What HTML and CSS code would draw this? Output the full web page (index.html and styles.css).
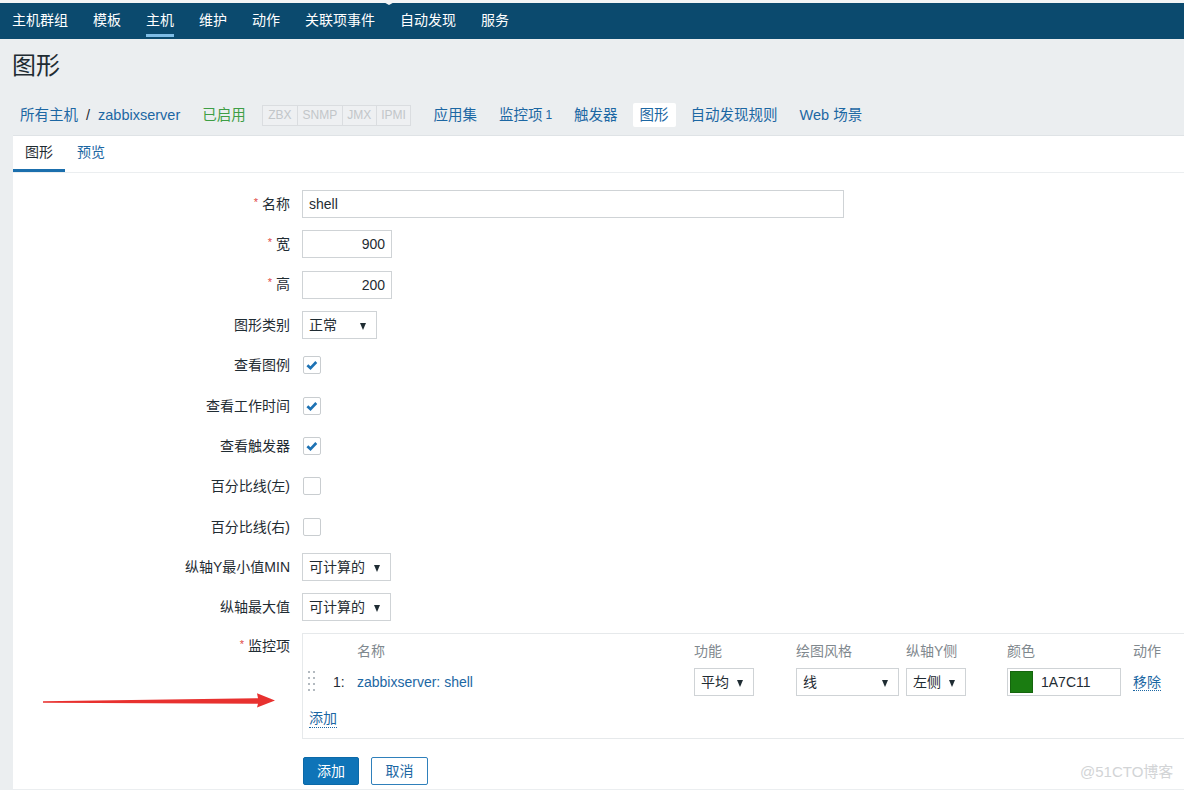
FILE: index.html
```html
<!DOCTYPE html>
<html lang="zh-CN">
<head>
<meta charset="utf-8">
<title>图形</title>
<link rel="stylesheet" href="styles.css">
</head>
<body>
<div class="top-strip"><span class="notch"></span></div>
<nav class="main-nav">
  <a>主机群组</a><a>模板</a><a class="active">主机</a><a>维护</a><a>动作</a><a>关联项事件</a><a>自动发现</a><a>服务</a>
</nav>
<header class="page-title"><h1>图形</h1></header>
<div class="host-bar">
  <span class="hb-item"><a class="link">所有主机</a><span class="sep">/</span><a class="link">zabbixserver</a></span>
  <span class="hb-item status-on">已启用</span>
  <span class="status-box"><span>ZBX</span><span>SNMP</span><span>JMX</span><span>IPMI</span></span>
  <a class="hb-item link">应用集</a>
  <a class="hb-item link">监控项 <span class="count">1</span></a>
  <a class="hb-item link">触发器</a>
  <a class="hb-item link selected">图形</a>
  <a class="hb-item link">自动发现规则</a>
  <a class="hb-item link">Web 场景</a>
</div>
<main class="panel">
  <div class="tabs"><a class="tab active">图形</a><a class="tab link">预览</a></div>
  <div class="form-list">
    <div class="form-row">
      <label class="form-label"><span class="req">*</span>名称</label>
      <div class="field"><span class="text-input w-name">shell</span></div>
    </div>
    <div class="form-row">
      <label class="form-label"><span class="req">*</span>宽</label>
      <div class="field"><span class="text-input num w-num">900</span></div>
    </div>
    <div class="form-row">
      <label class="form-label"><span class="req">*</span>高</label>
      <div class="field"><span class="text-input num w-num">200</span></div>
    </div>
    <div class="form-row">
      <label class="form-label">图形类别</label>
      <div class="field"><span class="select w-75">正常<i class="caret"></i></span></div>
    </div>
    <div class="form-row">
      <label class="form-label">查看图例</label>
      <div class="field"><span class="checkbox"><svg viewBox="0 0 18 18" width="16" height="16"><polyline points="3.8,9.3 7.3,12.6 13.8,5.6" fill="none" stroke="#1d72b4" stroke-width="3"/></svg></span></div>
    </div>
    <div class="form-row">
      <label class="form-label">查看工作时间</label>
      <div class="field"><span class="checkbox"><svg viewBox="0 0 18 18" width="16" height="16"><polyline points="3.8,9.3 7.3,12.6 13.8,5.6" fill="none" stroke="#1d72b4" stroke-width="3"/></svg></span></div>
    </div>
    <div class="form-row">
      <label class="form-label">查看触发器</label>
      <div class="field"><span class="checkbox"><svg viewBox="0 0 18 18" width="16" height="16"><polyline points="3.8,9.3 7.3,12.6 13.8,5.6" fill="none" stroke="#1d72b4" stroke-width="3"/></svg></span></div>
    </div>
    <div class="form-row">
      <label class="form-label">百分比线(左)</label>
      <div class="field"><span class="checkbox"></span></div>
    </div>
    <div class="form-row">
      <label class="form-label">百分比线(右)</label>
      <div class="field"><span class="checkbox"></span></div>
    </div>
    <div class="form-row">
      <label class="form-label">纵轴Y最小值MIN</label>
      <div class="field"><span class="select w-89">可计算的<i class="caret"></i></span></div>
    </div>
    <div class="form-row">
      <label class="form-label">纵轴最大值</label>
      <div class="field"><span class="select w-89">可计算的<i class="caret"></i></span></div>
    </div>
    <div class="form-row items-row">
      <label class="form-label top"><span class="req">*</span>监控项</label>
      <div class="field">
        <div class="items-table">
          <div class="it-row it-head">
            <span></span><span></span><span>名称</span><span>功能</span><span>绘图风格</span><span>纵轴Y侧</span><span>颜色</span><span>动作</span>
          </div>
          <div class="it-row it-data">
            <span class="handle"><svg width="8" height="22" viewBox="0 0 8 22"><g fill="#b3bac0"><rect x="0" y="0" width="2" height="2"/><rect x="5" y="0" width="2" height="2"/><rect x="0" y="6" width="2" height="2"/><rect x="5" y="6" width="2" height="2"/><rect x="0" y="12" width="2" height="2"/><rect x="5" y="12" width="2" height="2"/><rect x="0" y="18" width="2" height="2"/><rect x="5" y="18" width="2" height="2"/></g></svg></span>
            <span class="it-num">1:</span>
            <a class="link">zabbixserver: shell</a>
            <span><span class="select w-60">平均<i class="caret"></i></span></span>
            <span><span class="select w-103">线<i class="caret"></i></span></span>
            <span><span class="select w-60">左侧<i class="caret"></i></span></span>
            <span><span class="color-input"><span class="swatch"></span>1A7C11</span></span>
            <span><a class="link dotted">移除</a></span>
          </div>
          <div class="it-add"><a class="link dotted">添加</a></div>
        </div>
      </div>
    </div>
    <div class="form-row buttons-row">
      <span></span>
      <div class="field buttons">
        <button class="btn primary">添加</button>
        <button class="btn alt">取消</button>
      </div>
    </div>
  </div>
</main>
<svg class="annotation" width="1184" height="790" viewBox="0 0 1184 790">
  <polygon points="43,701.3 258,698.3 257,693.3 275,700.5 257,707.6 258,703.7 43,702.8" fill="#e8312f"/>
</svg>
<div class="watermark">@51CTO博客</div>
</body>
</html>
```
FILE: styles.css
```css
* { box-sizing: border-box; }
html, body { margin: 0; padding: 0; overflow: hidden; }
body {
  width: 1184px;
  height: 790px;
  position: relative;
  background: #ebeef0;
  font-family: "Liberation Sans", "Noto Sans CJK SC", sans-serif;
  font-size: 14px;
  color: #1f2c33;
}
a { text-decoration: none; cursor: pointer; }
.link { color: #1c67a3; }

.top-strip { height: 3px; background: #f3f5f6; position: relative; }
.notch {
  position: absolute; left: 380px; top: 0; width: 0; height: 0;
  border-left: 9px solid transparent; border-right: 9px solid transparent;
  border-top: 5px solid #f3f5f6; z-index: 2;
}
.main-nav { display: flex; height: 36px; background: #0b4a6e; }
.main-nav a {
  display: block; position: relative; height: 36px;
  padding: 0 12.5px; line-height: 34px; color: #fff;
}
.main-nav a:first-child { padding-left: 12px; }
.main-nav a.active::after {
  content: ""; position: absolute; left: 12.5px; right: 12.5px; bottom: 2px;
  height: 3px; background: #7fbde6;
}

.page-title { height: 48px; padding: 12px 12px 0; }
.page-title h1 { margin: 0; font-size: 24px; font-weight: normal; line-height: 30px; color: #1f2c33; }

.host-bar {
  display: flex; align-items: center; height: 48px;
  padding: 8px 0 0 13px; font-size: 14.5px;
}
.hb-item { padding: 0 7px; line-height: 24px; height: 24px; margin-right: 8px; display: flex; align-items: center; }
.hb-item .sep { margin: 0 8px; color: #1f2c33; }
.hb-item .count { font-size: 12px; margin-left: 3px; }
.status-on { color: #3e9e45; }
.status-box {
  display: flex; height: 21px; margin-left: 1px; margin-right: 15px;
  border: 1px solid #dadde0; background: #eef0f2;
  font-size: 12px; color: #c2c6c9; line-height: 19px;
}
.status-box span { padding: 0 4.5px; border-left: 1px solid #dadde0; }
.status-box span:first-child { border-left: 0; padding: 0 5.5px; }
.hb-item.selected { background: #fff; border-radius: 2px; }

.panel { margin-left: 13px; background: #fff; border-top: 1px solid #dfe3e6; height: 654px; }
.tabs { display: flex; height: 37px; border-bottom: 1px solid #ebeef0; }
.tab { display: block; height: 36px; padding: 0 12px; line-height: 33px; border-bottom: 3px solid transparent; }
.tab.active { border-bottom-color: #1b6fad; color: #1f2c33; }

.form-list { padding-top: 11px; }
.form-row {
  display: grid; grid-template-columns: 277px 1fr; column-gap: 12px;
  align-items: center; height: 40.3px;
}
.form-label { text-align: right; line-height: 20px; }
.req { color: #e04a44; font-size: 11px; position: relative; top: -3px; margin-right: 4px; }
.field { display: flex; align-items: center; }

.text-input {
  display: block; height: 28px; border: 1px solid #cfd3d6; background: #fff;
  line-height: 27px; padding: 0 6px; color: #1f2c33;
}
.text-input.num { text-align: right; }
.w-name { width: 542px; }
.w-num { width: 90px; }

.select {
  display: block; position: relative; height: 28px; border: 1px solid #cfd3d6;
  background: #fff; line-height: 27px; padding: 0 6px; color: #1f2c33;
}
.caret {
  position: absolute; right: 10px; top: 11px; width: 0; height: 0;
  border-left: 3.5px solid transparent; border-right: 3.5px solid transparent;
  border-top: 7px solid #1f2c33;
}
.w-75 { width: 75px; }
.w-89 { width: 89px; }
.w-60 { width: 60px; }
.w-103 { width: 103px; }

.checkbox {
  display: flex; align-items: center; justify-content: center;
  width: 18px; height: 18px; margin-left: 1px;
  border: 1px solid #c9cdd0; border-radius: 2px; background: #fff;
}

.items-row { height: auto; align-items: start; }
.form-label.top { padding-top: 9px; }
.items-row .field { margin-top: 6px; display: block; }
.items-table { width: 900px; border: 1px solid #e6e9eb; border-right: 0; }
.it-row {
  display: grid;
  grid-template-columns: 24px 30px 337px 102px 110px 101px 126px 1fr;
  align-items: center;
}
.it-head { height: 32px; color: #7f888e; }
.it-data { height: 32px; }
.handle { padding-left: 5px; display: flex; align-items: center; }
.it-num { padding-left: 6px; }
.it-add { height: 40px; display: flex; align-items: center; padding-left: 6px; }
.dotted { border-bottom: 1px dotted #1c67a3; line-height: 18px; }

.color-input {
  display: flex; align-items: center; width: 114px; height: 28px;
  border: 1px solid #cfd3d6; padding-left: 2px; color: #1f2c33;
}
.swatch { width: 23px; height: 22px; background: #1a7c11; margin-right: 8px; border: 1px solid #15650e; }

.buttons-row { height: auto; margin-top: 18px; }
.buttons { gap: 12px; }
.btn {
  height: 28px; border-radius: 2px; font-family: inherit; font-size: 14px;
  padding: 0; margin: 0; line-height: 26px;
}
.btn.primary { width: 56px; background: #0f74b8; border: 1px solid #0b69a8; color: #fff; margin-left: 1px; }
.btn.alt { width: 57px; background: #fff; border: 1px solid #2f80bb; color: #1c67a3; }

.annotation { position: absolute; left: 0; top: 0; pointer-events: none; }
.watermark {
  position: absolute; left: 1080px; top: 762px; font-size: 15px; line-height: 20px;
  color: #d2d4d6;
}
```
